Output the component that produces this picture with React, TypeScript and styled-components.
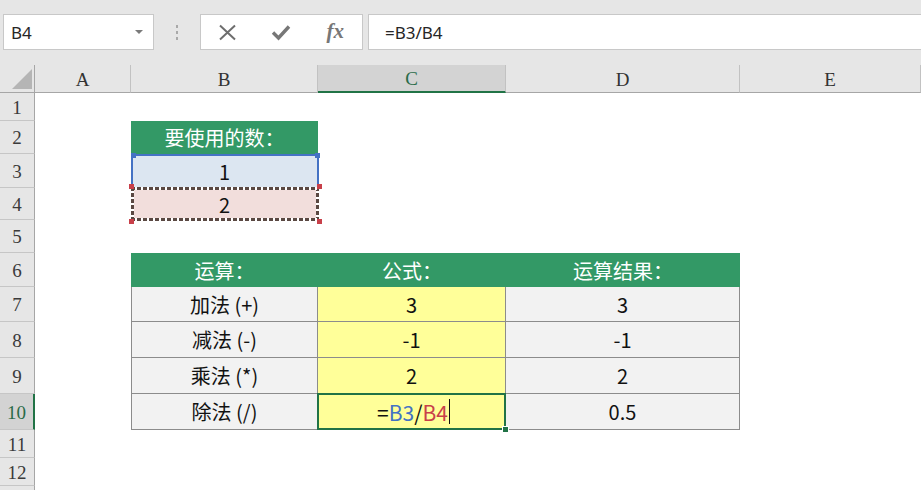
import React from "react";
import styled, { createGlobalStyle, css } from "styled-components";

const GlobalStyle = createGlobalStyle`
  html, body {
    margin: 0;
    padding: 0;
    background: #fff;
    overflow: hidden;
  }
  body {
    font-family: "Noto Sans", "Noto Sans CJK SC", sans-serif;
  }
`;

const GREEN = "#339966";
const EXCEL_GREEN = "#217346";
const REF_BLUE = "#4472c4";
const REF_RED = "#c8404a";

const COLUMNS = ["A", "B", "C", "D", "E"];
// row 13 only peeks in at the bottom edge, so it gets no label
const ROW_HEIGHTS = [28, 33, 34, 32, 33, 34, 35, 36, 36, 36, 28, 28, 28];
const LAST_LABELED_ROW = 12;

const Page = styled.div`
  width: 921px;
  height: 490px;
  overflow: hidden;
  background: #fff;
  display: flex;
  flex-direction: column;
`;

const Toolbar = styled.div`
  flex: none;
  height: 65px;
  box-sizing: border-box;
  padding: 14px 0 0 3px;
  background: #e6e6e6;
  display: flex;
  align-items: flex-start;
`;

const NameBox = styled.div`
  width: 151px;
  height: 36px;
  box-sizing: border-box;
  background: #fff;
  border: 1px solid #c8c8c8;
  padding: 0 10px 0 7px;
  display: flex;
  align-items: center;
  justify-content: space-between;
  font-family: "Noto Sans", "Open Sans", sans-serif;
  font-size: 17px;
  color: #262626;
`;

const Caret = styled.span`
  width: 0;
  height: 0;
  border-left: 4px solid transparent;
  border-right: 4px solid transparent;
  border-top: 4px solid #7a7a7a;
`;

const Splitter = styled.div`
  width: 46px;
  height: 36px;
  display: flex;
  flex-direction: column;
  align-items: center;
  justify-content: center;
  gap: 3px;

  span {
    width: 2px;
    height: 3px;
    background: #a9a9a9;
  }
`;

const FxGroup = styled.div`
  width: 163px;
  height: 36px;
  box-sizing: border-box;
  background: #fff;
  border: 1px solid #c8c8c8;
  display: grid;
  grid-template-columns: repeat(3, 1fr);
  align-items: center;
  justify-items: center;
  color: #727272;
`;

const FxText = styled.span`
  font-family: "Liberation Serif", "DejaVu Serif", serif;
  font-style: italic;
  font-weight: bold;
  font-size: 21px;
  color: #777;
  margin-top: -2px;
`;

const FormulaBar = styled.div`
  flex: 1;
  height: 36px;
  margin-left: 5px;
  box-sizing: border-box;
  background: #fff;
  border: 1px solid #c8c8c8;
  border-right: none;
  padding-left: 16px;
  display: flex;
  align-items: center;
  font-family: "Noto Sans", "Open Sans", sans-serif;
  font-size: 17px;
  color: #262626;
`;

const Sheet = styled.div`
  display: grid;
  grid-template-columns: 35px 96px 187px 188px 234px 181px;
  grid-template-rows: 28px ${ROW_HEIGHTS.map((h) => `${h}px`).join(" ")};
`;

const Corner = styled.div`
  background: #e6e6e6;
  border-right: 1px solid #a6a6a6;
  border-bottom: 1px solid #a6a6a6;
  box-sizing: border-box;
  display: flex;
  align-items: flex-end;
  justify-content: flex-end;
  padding: 0 2px 3px 0;

  &::after {
    content: "";
    width: 20px;
    height: 20px;
    background: #b5b5b5;
    clip-path: polygon(100% 0, 100% 100%, 0 100%);
  }
`;

const ColHeader = styled.div<{ $active?: boolean }>`
  box-sizing: border-box;
  background: ${(p) => (p.$active ? "#d3d3d3" : "#e6e6e6")};
  border-right: 1px solid #c2c2c2;
  border-bottom: ${(p) => (p.$active ? `2px solid ${EXCEL_GREEN}` : "1px solid #a6a6a6")};
  display: flex;
  align-items: center;
  justify-content: center;
  font-family: "Liberation Serif", "DejaVu Serif", serif;
  font-size: 19px;
  color: ${(p) => (p.$active ? "#2a6b49" : "#333")};
  padding-top: 2px;
`;

const RowHeader = styled.div<{ $active?: boolean }>`
  box-sizing: border-box;
  background: ${(p) => (p.$active ? "#d3d3d3" : "#e6e6e6")};
  border-right: ${(p) => (p.$active ? `2px solid ${EXCEL_GREEN}` : "1px solid #a6a6a6")};
  border-bottom: 1px solid #c6c6c6;
  display: flex;
  align-items: center;
  justify-content: center;
  font-family: "Liberation Serif", "DejaVu Serif", serif;
  font-size: 19px;
  color: ${(p) => (p.$active ? "#2a6b49" : "#3a3a3a")};
  padding-top: 2px;
`;

type Kind = "title" | "blue" | "pink" | "label" | "formula" | "result";

const kindStyles: Record<Kind, ReturnType<typeof css>> = {
  title: css`
    background: ${GREEN};
    color: #fff;
  `,
  blue: css`
    background: #dce6f1;
  `,
  pink: css`
    background: #f2dedc;
  `,
  label: css`
    background: #f2f2f2;
    border-left: 1px solid #8c8c8c;
    border-right: 1px solid #8c8c8c;
    border-bottom: 1px solid #8c8c8c;
  `,
  formula: css`
    background: #ffff99;
    border-right: 1px solid #8c8c8c;
    border-bottom: 1px solid #8c8c8c;
  `,
  result: css`
    background: #f2f2f2;
    border-right: 1px solid #8c8c8c;
    border-bottom: 1px solid #8c8c8c;
  `,
};

const Cell = styled.div<{ $kind?: Kind; $overlay?: boolean }>`
  box-sizing: border-box;
  position: ${(p) => (p.$overlay ? "relative" : "static")};
  display: flex;
  align-items: center;
  justify-content: center;
  font-family: "Noto Sans CJK SC", "Noto Sans", sans-serif;
  font-size: 20px;
  color: #111;
  white-space: pre;
  ${(p) => p.$kind && kindStyles[p.$kind]}
`;

const Handle = styled.span<{ $color: string; $pos: "tl" | "tr" | "bl" | "br" }>`
  position: absolute;
  width: 5px;
  height: 5px;
  background: ${(p) => p.$color};
  ${(p) => (p.$pos[0] === "t" ? "top: -3px;" : "bottom: -3px;")}
  ${(p) => (p.$pos[1] === "l" ? "left: -2px;" : "right: -3px;")}
`;

const RefBox = styled.div<{ $color: string }>`
  position: absolute;
  top: 0;
  left: 0;
  right: -1px;
  bottom: 0;
  border: 2px solid ${(p) => p.$color};
  border-bottom: none;
  pointer-events: none;
  z-index: 1;
`;

const ant = (dir: string) =>
  `repeating-linear-gradient(${dir}, #5a4842 0 4px, #ffffff 4px 6px)`;

const CopyBox = styled.div`
  position: absolute;
  top: -1px;
  left: 0;
  right: -1px;
  bottom: -1px;
  pointer-events: none;
  z-index: 2;
  background:
    ${ant("90deg")} top / 100% 3px no-repeat,
    ${ant("90deg")} bottom / 100% 3px no-repeat,
    ${ant("180deg")} left / 3px 100% no-repeat,
    ${ant("180deg")} right / 3px 100% no-repeat;
`;

const ActiveBox = styled.div`
  position: absolute;
  top: -1px;
  left: -1px;
  right: -1px;
  bottom: -1px;
  border: 2px solid ${EXCEL_GREEN};
  pointer-events: none;
  z-index: 2;
`;

const FillHandle = styled.span`
  position: absolute;
  right: -5px;
  bottom: -5px;
  width: 5px;
  height: 5px;
  background: ${EXCEL_GREEN};
  border: 1px solid #fff;
`;

const RefText = styled.span<{ $color: string }>`
  color: ${(p) => p.$color};
`;

const Cursor = styled.span`
  display: inline-block;
  width: 1px;
  height: 25px;
  background: #111;
  margin-left: 1px;
`;

const EditText = styled.span`
  display: flex;
  align-items: center;
  font-size: 21px;
  padding-left: 4px;
`;

type CellData = { kind: Kind; text?: React.ReactNode };

const editing = (
  <EditText>
    =<RefText $color={REF_BLUE}>B3</RefText>/<RefText $color={REF_RED}>B4</RefText>
    <Cursor />
  </EditText>
);

const cells: Record<string, CellData> = {
  B2: { kind: "title", text: "要使用的数：" },
  B3: { kind: "blue", text: "1" },
  B4: { kind: "pink", text: "2" },
  B6: { kind: "title", text: "运算：" },
  C6: { kind: "title", text: "公式：" },
  D6: { kind: "title", text: "运算结果：" },
  B7: { kind: "label", text: "加法 (+)" },
  C7: { kind: "formula", text: "3" },
  D7: { kind: "result", text: "3" },
  B8: { kind: "label", text: "减法 (-)" },
  C8: { kind: "formula", text: "-1" },
  D8: { kind: "result", text: "-1" },
  B9: { kind: "label", text: "乘法 (*)" },
  C9: { kind: "formula", text: "2" },
  D9: { kind: "result", text: "2" },
  B10: { kind: "label", text: "除法 (/)" },
  C10: { kind: "formula", text: editing },
  D10: { kind: "result", text: "0.5" },
};

const overlays: Record<string, React.ReactNode> = {
  B3: (
    <RefBox $color={REF_BLUE}>
      <Handle $color={REF_BLUE} $pos="tl" />
      <Handle $color={REF_BLUE} $pos="tr" />
    </RefBox>
  ),
  B4: (
    <CopyBox>
      <Handle $color={REF_RED} $pos="tl" />
      <Handle $color={REF_RED} $pos="tr" />
      <Handle $color={REF_RED} $pos="bl" />
      <Handle $color={REF_RED} $pos="br" />
    </CopyBox>
  ),
  C10: (
    <ActiveBox>
      <FillHandle />
    </ActiveBox>
  ),
};

const CloseIcon = () => (
  <svg width="19" height="17" viewBox="0 0 19 17">
    <path d="M2 1.5 L17 15.5 M17 1.5 L2 15.5" stroke="#6e6e6e" strokeWidth="2" fill="none" />
  </svg>
);

const CheckIcon = () => (
  <svg width="20" height="17" viewBox="0 0 20 17">
    <path d="M2 8.5 L7.5 14 L18 2.5" stroke="#777" strokeWidth="3.4" fill="none" />
  </svg>
);

export default function App() {
  const rows = ROW_HEIGHTS.map((_, i) => i + 1);

  return (
    <Page>
      <GlobalStyle />
      <Toolbar>
        <NameBox>
          B4
          <Caret />
        </NameBox>
        <Splitter>
          <span />
          <span />
          <span />
        </Splitter>
        <FxGroup>
          <CloseIcon />
          <CheckIcon />
          <FxText>fx</FxText>
        </FxGroup>
        <FormulaBar>=B3/B4</FormulaBar>
      </Toolbar>
      <Sheet>
        <Corner />
        {COLUMNS.map((c) => (
          <ColHeader key={c} $active={c === "C"}>
            {c}
          </ColHeader>
        ))}
        {rows.map((r) => (
          <React.Fragment key={r}>
            <RowHeader $active={r === 10}>{r <= LAST_LABELED_ROW ? r : null}</RowHeader>
            {COLUMNS.map((c) => {
              const id = `${c}${r}`;
              const data = cells[id];
              const overlay = overlays[id];
              return (
                <Cell key={id} $kind={data?.kind} $overlay={!!overlay}>
                  {data?.text}
                  {overlay}
                </Cell>
              );
            })}
          </React.Fragment>
        ))}
      </Sheet>
    </Page>
  );
}
